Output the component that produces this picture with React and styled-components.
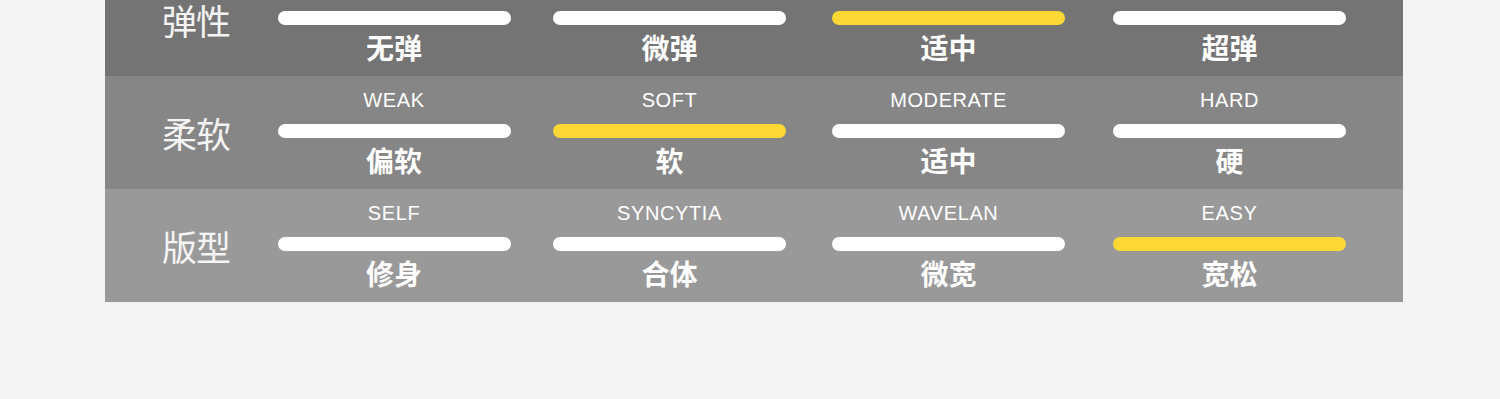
import React from 'react';
import styled, { createGlobalStyle } from 'styled-components';

const GlobalStyle = createGlobalStyle`
  html, body {
    margin: 0;
    padding: 0;
    background: #f4f4f4;
  }
  body {
    font-family: "Liberation Sans", "Noto Sans CJK SC", sans-serif;
  }
`;

// product attribute rows: each level has an english tag, a bar and a chinese name
const rows = [
  {
    name: '弹性',
    tone: '#747474',
    active: 2,
    levels: [
      { en: '', zh: '无弹' },
      { en: '', zh: '微弹' },
      { en: '', zh: '适中' },
      { en: '', zh: '超弹' },
    ],
  },
  {
    name: '柔软',
    tone: '#868686',
    active: 1,
    levels: [
      { en: 'WEAK', zh: '偏软' },
      { en: 'SOFT', zh: '软' },
      { en: 'MODERATE', zh: '适中' },
      { en: 'HARD', zh: '硬' },
    ],
  },
  {
    name: '版型',
    tone: '#999999',
    active: 3,
    levels: [
      { en: 'SELF', zh: '修身' },
      { en: 'SYNCYTIA', zh: '合体' },
      { en: 'WAVELAN', zh: '微宽' },
      { en: 'EASY', zh: '宽松' },
    ],
  },
];

const Page = styled.div`
  width: 1500px;
  height: 399px;
  overflow: hidden;
`;

const Table = styled.div`
  width: 1298px;
  margin: -37px 0 0 105px;
`;

const Row = styled.div`
  display: grid;
  grid-template-columns: 150px 278px 273px 285px 277px;
  height: 113px;
  background: ${p => p.tone};
`;

const Label = styled.div`
  display: flex;
  align-items: center;
  justify-content: center;
  padding-left: 32px;
  font-family: "Noto Sans CJK SC", sans-serif;
  font-size: 35px;
  font-weight: 400;
  color: #f4f4f4;
  letter-spacing: -1px;
`;

const Cell = styled.div`
  display: flex;
  flex-direction: column;
  align-items: center;
  padding-top: 14px;
`;

const English = styled.div`
  font-family: "Liberation Sans", sans-serif;
  font-size: 20px;
  line-height: 20px;
  height: 20px;
  letter-spacing: 0.6px;
  color: #ffffff;
`;

const Bar = styled.div`
  width: 233px;
  height: 14px;
  margin-top: 14px;
  border-radius: 7px;
  background: ${p => (p.on ? '#fdd835' : '#ffffff')};
`;

const Chinese = styled.div`
  margin-top: 8px;
  font-family: "Noto Sans CJK SC", sans-serif;
  font-size: 28px;
  font-weight: 700;
  line-height: 28px;
  color: #ffffff;
`;

export default function App() {
  return (
    <Page>
      <GlobalStyle />
      <Table>
        {rows.map(row => (
          <Row key={row.name} tone={row.tone}>
            <Label>{row.name}</Label>
            {row.levels.map((lv, i) => (
              <Cell key={lv.zh + i}>
                <English>{lv.en}</English>
                <Bar on={i === row.active} />
                <Chinese>{lv.zh}</Chinese>
              </Cell>
            ))}
          </Row>
        ))}
      </Table>
    </Page>
  );
}
